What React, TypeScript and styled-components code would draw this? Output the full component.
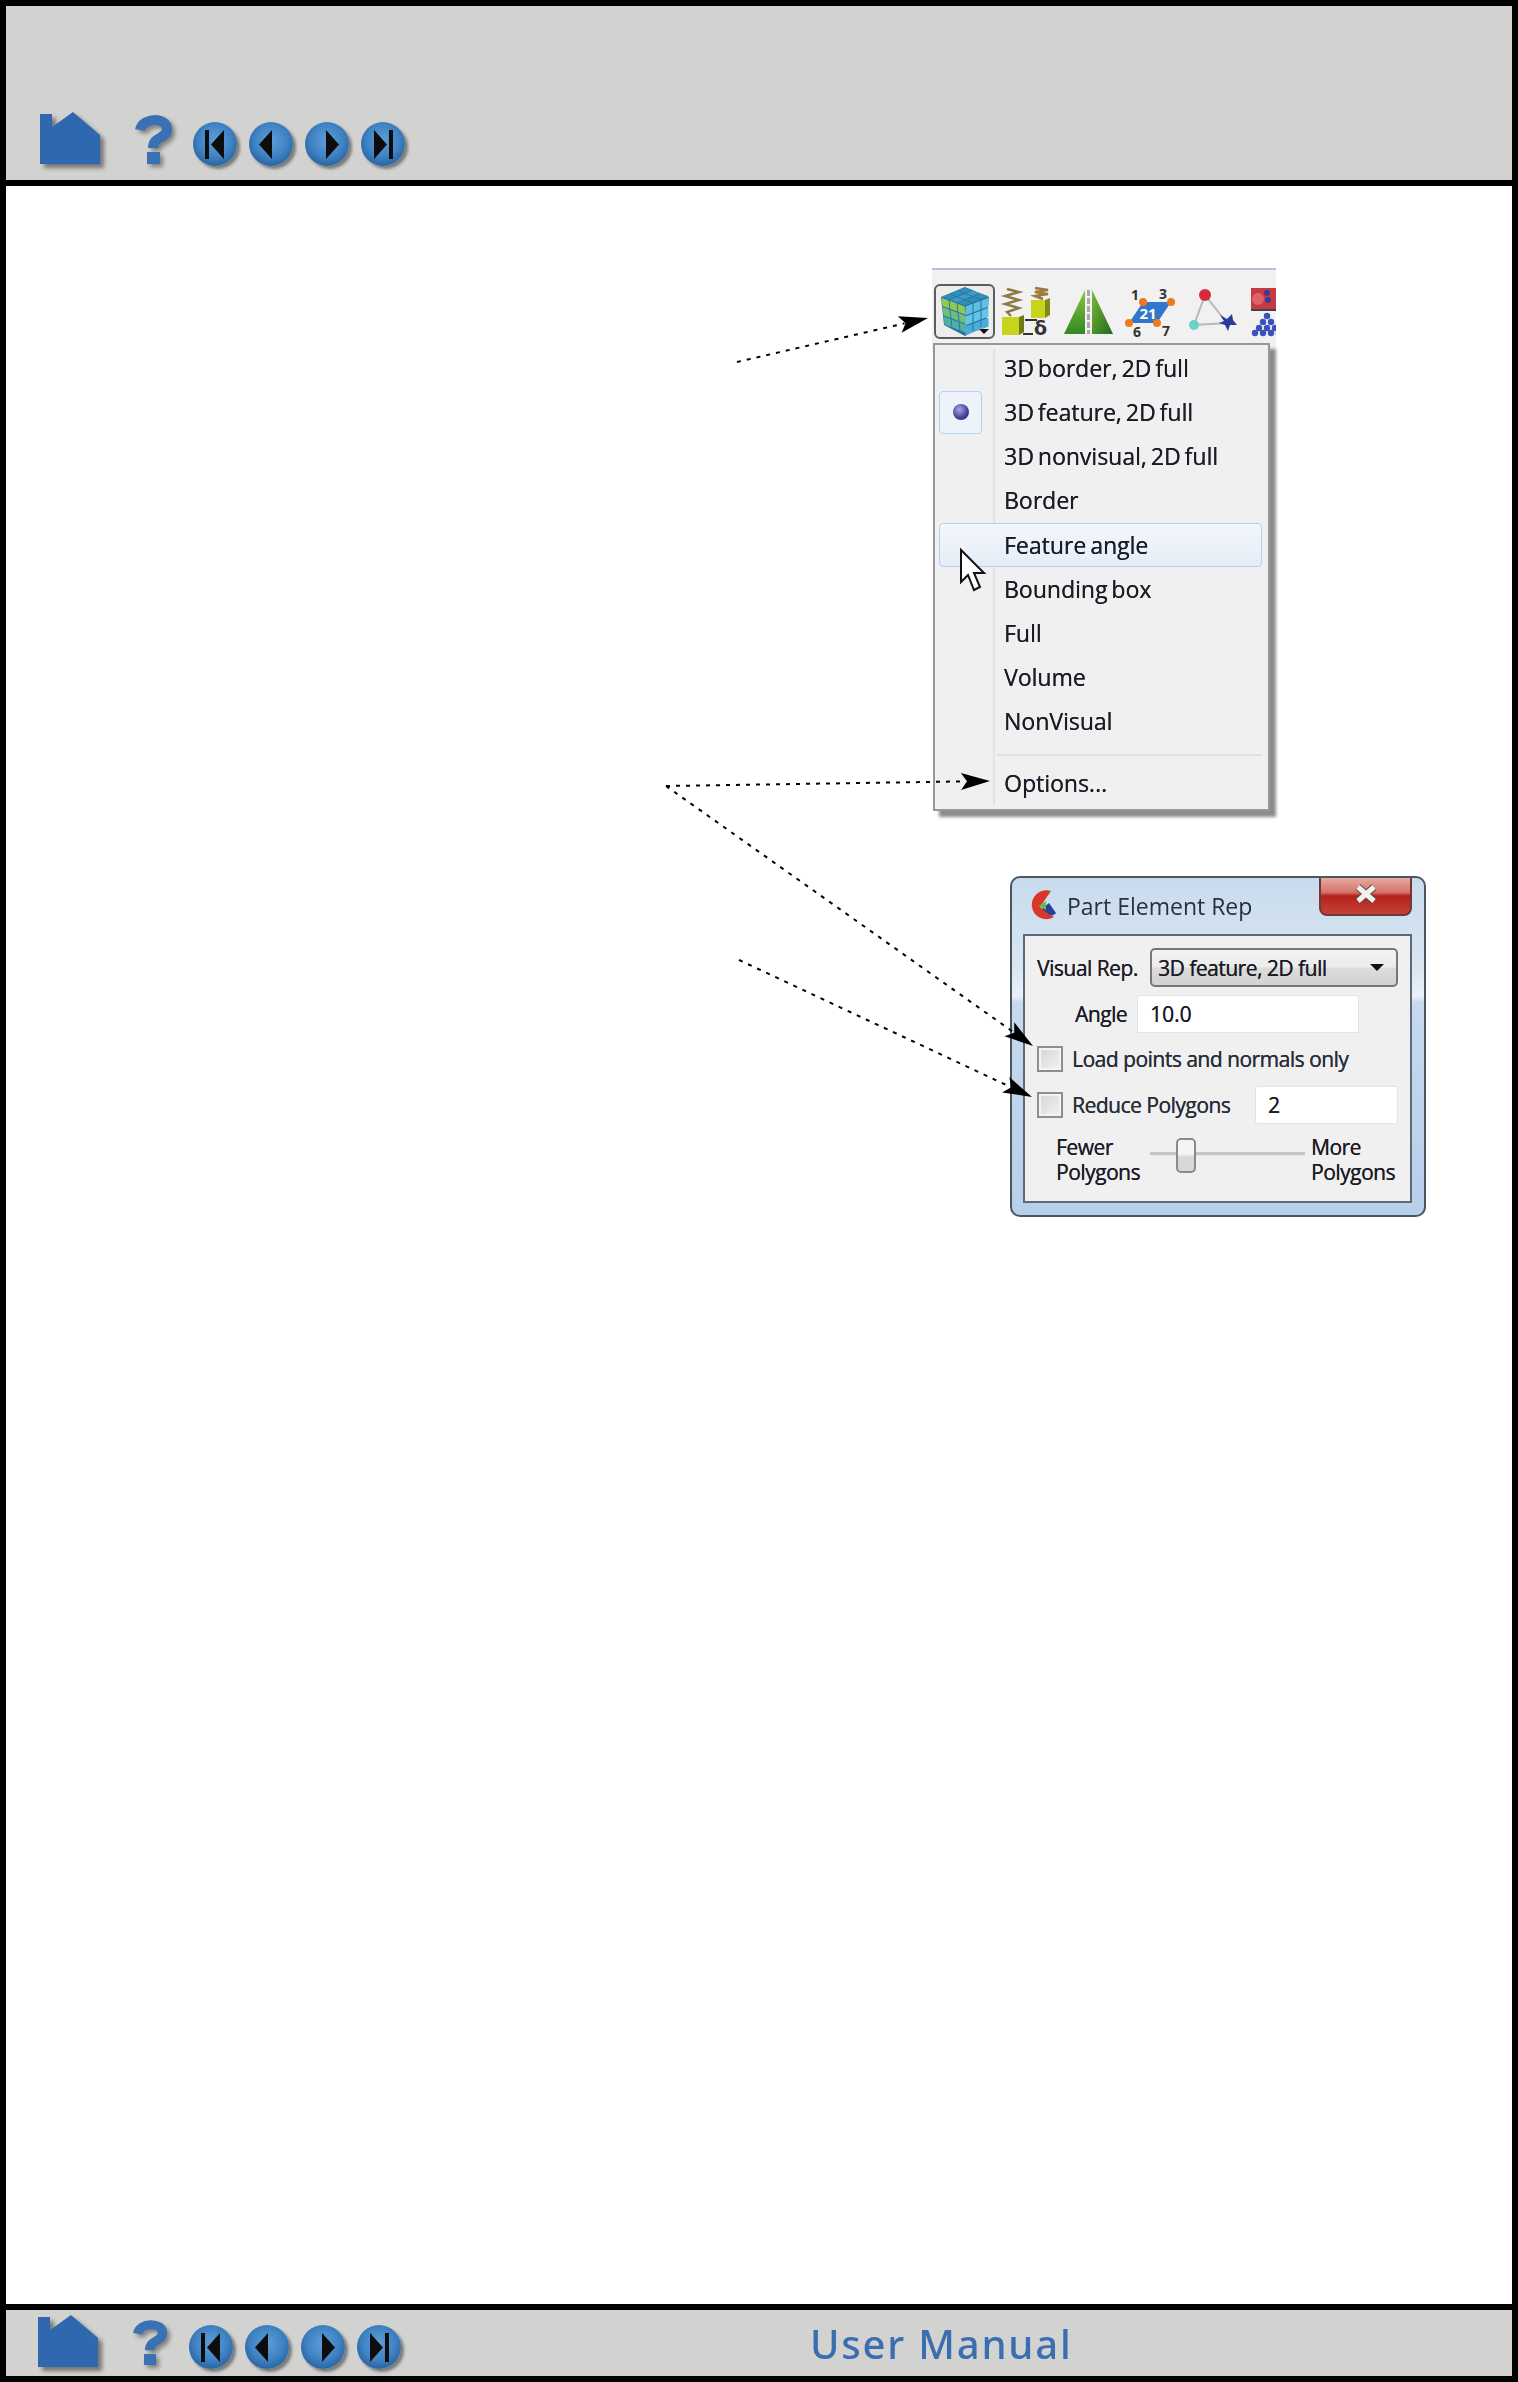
import styled, { createGlobalStyle } from "styled-components";

const GlobalStyle = createGlobalStyle`
  html, body { margin: 0; padding: 0; background: #fff; }
`;

const Frame = styled.div`
  width: 1518px;
  height: 2382px;
  box-sizing: border-box;
  border: 6px solid #000;
  position: relative;
  display: flex;
  flex-direction: column;
  font-family: "Open Sans", "Noto Sans", sans-serif;
  color: #1c1c28;
  overflow: hidden;
`;

const Header = styled.header`
  height: 180px;
  box-sizing: border-box;
  background: #d2d2d0;
  border-bottom: 6px solid #000;
  display: flex;
  align-items: flex-end;
`;

const Footer = styled.footer`
  height: 72px;
  box-sizing: border-box;
  background: #d2d2d0;
  border-top: 6px solid #000;
  display: flex;
  align-items: flex-end;
`;

const NavRow = styled.nav<{ $left: number; $bottom: number }>`
  display: flex;
  align-items: flex-end;
  padding-left: ${p => p.$left}px;
  padding-bottom: ${p => p.$bottom}px;
`;

const HomeIcon = styled.svg`
  width: 60px;
  height: 52px;
  margin: 0 35px 2px 0;
  overflow: visible;
  filter: drop-shadow(4px 4px 2px #757575);
`;

const HelpIcon = styled.svg<{ $width: number; $after: number }>`
  width: ${p => p.$width}px;
  height: 48px;
  margin: 0 ${p => p.$after}px 2px 0;
  overflow: visible;
  filter: drop-shadow(3px 3px 2px #808080);
`;

const RoundButton = styled.div`
  width: 44px;
  height: 44px;
  margin-right: 12px;
  border-radius: 50%;
  background: radial-gradient(circle at 50% 42%, #5f9fd6 0%, #3f83c4 48%, #28629f 78%, #1b4a80 100%);
  box-shadow: 3px 3px 3px #7a7a7a;
  &:last-child { margin-right: 0; }
`;

const Glyph = styled.svg`
  display: block;
  width: 44px;
  height: 44px;
`;

const ManualTitle = styled.div`
  margin: 0 0 6px 409px;
  width: 262px;
  font-family: "Noto Sans", "Open Sans", sans-serif;
  font-size: 40px;
  line-height: 52px;
  font-weight: 500;
  letter-spacing: 1.8px;
  color: #3a6eb0;
  white-space: nowrap;
  filter: blur(0.5px);
`;

const Main = styled.main`
  flex: 1;
  background: #fff;
  display: flex;
  flex-direction: column;
  padding-top: 82px;
`;

const Figure = styled.div`
  display: flex;
  flex-direction: column;
  align-items: flex-start;
  filter: blur(0.45px);
`;

const Toolbar = styled.div`
  margin-left: 926px;
  width: 344px;
  height: 84px;
  box-sizing: border-box;
  background: #f1f1f1;
  border-top: 2px solid #b9bdd6;
  padding: 14px 0 0 2px;
  display: flex;
  align-items: flex-start;
  overflow: hidden;
`;

const ToolMenuButton = styled.div`
  width: 61px;
  height: 55px;
  flex-shrink: 0;
  box-sizing: border-box;
  border: 2px solid #5c5c5c;
  border-radius: 6px;
  background: #ececec;
  position: relative;
`;

const DropCaret = styled.span`
  position: absolute;
  right: 4px;
  bottom: 3px;
  border-left: 5px solid transparent;
  border-right: 5px solid transparent;
  border-top: 5px solid #111;
`;

const ToolIcon = styled.svg`
  display: block;
  width: 62px;
  height: 56px;
  flex-shrink: 0;
`;

const CubeIcon = styled.svg`
  display: block;
  width: 57px;
  height: 51px;
`;

const Menu = styled.div`
  margin: -9px 0 0 927px;
  width: 337px;
  height: 468px;
  box-sizing: border-box;
  background: #f0f0f0;
  border: 2px solid #979797;
  box-shadow: 6px 6px 3px #8c8c8c;
  padding-top: 1px;
  position: relative;
  &::before {
    content: "";
    position: absolute;
    left: 58px;
    top: 4px;
    bottom: 4px;
    width: 2px;
    background: #e2e2e2;
  }
`;

const MenuItem = styled.div<{ $hover?: boolean }>`
  position: relative;
  height: 44.15px;
  margin: 0 6px 0 4px;
  box-sizing: border-box;
  display: flex;
  align-items: center;
  font-size: 23px;
  line-height: 30px;
  word-spacing: -2px;
  text-shadow: 0.25px 0 0 #1c1c28;
  border-radius: 4px;
  border: 1px solid ${p => (p.$hover ? "#b4d0f0" : "transparent")};
  background: ${p => (p.$hover ? "linear-gradient(#f3f7fb, #e4edf7)" : "transparent")};
`;

const CheckSlot = styled.span<{ $on?: boolean }>`
  width: 43px;
  height: 43px;
  margin: 0 22px 0 -1px;
  box-sizing: border-box;
  flex-shrink: 0;
  border-radius: 4px;
  border: 1px solid ${p => (p.$on ? "#b4d0f0" : "transparent")};
  background: ${p => (p.$on ? "#eef3f9" : "transparent")};
  display: flex;
  align-items: center;
  justify-content: center;
`;

const RadioDot = styled.span`
  width: 16px;
  height: 16px;
  border-radius: 50%;
  background: radial-gradient(circle at 40% 35%, #a8a8e0, #3f3f98 60%, #25256a);
`;

const MenuSeparator = styled.div`
  height: 2px;
  margin: 11px 6px 5px 62px;
  background: #e0e0e0;
`;

const Cursor = styled.svg`
  position: absolute;
  left: 20px;
  top: 25px;
  width: 26px;
  height: 44px;
  overflow: visible;
`;

const Dialog = styled.section`
  margin: 65px 0 0 1004px;
  width: 416px;
  height: 341px;
  box-sizing: border-box;
  border: 2px solid #4a5661;
  border-radius: 10px;
  padding: 0 12px 12px 11px;
  background: linear-gradient(#c8dbed 0%, #d9e6f2 26%, #e9f1f8 35%, #c6d9ef 37%, #b8cfea 100%);
  display: flex;
  flex-direction: column;
`;

const TitleBar = styled.div`
  height: 56px;
  flex-shrink: 0;
  display: flex;
  align-items: flex-start;
`;

const AppLogo = styled.svg`
  width: 27px;
  height: 32px;
  margin: 11px 11px 0 6px;
`;

const TitleText = styled.div`
  font-size: 23px;
  line-height: 30px;
  margin-top: 13px;
  color: #26323e;
`;

const CloseButton = styled.div`
  margin-left: auto;
  width: 93px;
  height: 38px;
  box-sizing: border-box;
  border: 2px solid #6d3a3a;
  border-top: none;
  border-radius: 0 0 8px 8px;
  background: linear-gradient(#e6aaa2 0%, #d87268 40%, #b3221c 50%, #c4423a 100%);
  display: flex;
  justify-content: center;
  padding-top: 6px;
`;

const CloseMark = styled.svg`
  width: 24px;
  height: 20px;
`;

const Panel = styled.div`
  flex: 1;
  box-sizing: border-box;
  background: #f0f0f0;
  border: 2px solid #5a6a78;
  padding: 12px 12px 0 12px;
  display: flex;
  flex-direction: column;
  font-size: 21px;
  line-height: 26px;
  letter-spacing: -0.5px;
  text-shadow: 0.2px 0 0 #1c1c28;
`;

const Row = styled.div<{ $height: number; $top?: number; $indent?: number }>`
  display: flex;
  align-items: center;
  height: ${p => p.$height}px;
  margin-top: ${p => p.$top ?? 0}px;
  padding-left: ${p => p.$indent ?? 0}px;
`;

const FieldLabel = styled.span<{ $width: number }>`
  width: ${p => p.$width}px;
  flex-shrink: 0;
  white-space: nowrap;
`;

const ComboBox = styled.div`
  width: 248px;
  height: 39px;
  box-sizing: border-box;
  border: 2px solid #777;
  border-radius: 5px;
  padding: 0 12px 0 6px;
  background: linear-gradient(#f3f3f3 0%, #ececec 48%, #dcdcda 52%, #d2d2d0 100%);
  display: flex;
  align-items: center;
  justify-content: space-between;
`;

const ComboCaret = styled.span`
  border-left: 7px solid transparent;
  border-right: 7px solid transparent;
  border-top: 7px solid #111;
`;

const TextInput = styled.div<{ $width: number }>`
  width: ${p => p.$width}px;
  height: 38px;
  flex-shrink: 0;
  box-sizing: border-box;
  background: #fff;
  border: 1px solid #e4e4e4;
  border-radius: 2px;
  padding-left: 12px;
  display: flex;
  align-items: center;
  letter-spacing: 0;
`;

const CheckBox = styled.span`
  width: 26px;
  height: 26px;
  margin-right: 9px;
  flex-shrink: 0;
  box-sizing: border-box;
  border: 2px solid #8e8e8e;
  outline: 2px solid #f4f4f4;
  outline-offset: -4px;
  background: linear-gradient(135deg, #d6d6d6, #f2f2f2);
`;

const CheckLabel = styled.span<{ $width?: number }>`
  width: ${p => (p.$width ? `${p.$width}px` : "auto")};
  white-space: nowrap;
  color: #28303c;
`;

const SliderLabel = styled.div<{ $width: number }>`
  width: ${p => p.$width}px;
  flex-shrink: 0;
  line-height: 25px;
`;

const SliderTrack = styled.div`
  width: 155px;
  height: 3px;
  margin-right: 6px;
  margin-top: -12px;
  flex-shrink: 0;
  background: #c4c4c4;
  border-bottom: 1px solid #e8e8e8;
  position: relative;
`;

const SliderThumb = styled.span`
  position: absolute;
  left: 26px;
  top: -14px;
  width: 20px;
  height: 35px;
  box-sizing: border-box;
  border: 2px solid #8a8a8a;
  border-radius: 5px;
  background: linear-gradient(#f4f4f4 45%, #d8d8d8 55%);
`;

const Annotations = styled.svg`
  position: absolute;
  left: -6px;
  top: -6px;
  width: 1518px;
  height: 2382px;
  pointer-events: none;
`;

const Arrow = ({ x1, y1, x2, y2 }: { x1: number; y1: number; x2: number; y2: number }) => {
  const angle = (Math.atan2(y2 - y1, x2 - x1) * 180) / Math.PI;
  const rad = (angle * Math.PI) / 180;
  return (
    <g>
      <line
        x1={x1}
        y1={y1}
        x2={x2 - Math.cos(rad) * 24}
        y2={y2 - Math.sin(rad) * 24}
        stroke="#000"
        strokeWidth={2}
        strokeDasharray="4 6"
      />
      <polygon
        points="0,0 -29,-8.5 -23,0 -29,8.5"
        fill="#000"
        transform={`translate(${x2} ${y2}) rotate(${angle})`}
      />
    </g>
  );
};

type GlyphKind = "first" | "prev" | "next" | "last";

const glyphShapes: Record<GlyphKind, string[]> = {
  first: ["12,8 16,8 16,37 12,37", "31,8 31,37 18,22.5"],
  prev: ["23,8 23,37 10,22.5"],
  next: ["21,8 21,37 34,22.5"],
  last: ["28,8 32,8 32,37 28,37", "13,8 13,37 26,22.5"],
};

const NavIcons = ({ helpWidth, helpAfter }: { helpWidth: number; helpAfter: number }) => (
  <>
    <HomeIcon viewBox="0 0 60 52">
      <polygon points="0,2 12,2 12,15 33,0 60,23 60,52 0,52" fill="#3068b0" />
    </HomeIcon>
    <HelpIcon $width={helpWidth} $after={helpAfter} viewBox="0 0 37 48">
      <path
        d="M5 14 C7 1 32 1 32 13 C32 23 18 20 18 32"
        fill="none"
        stroke="#3a70b4"
        strokeWidth={10}
      />
      <rect x="12" y="36" width="13" height="12" fill="#3a70b4" />
    </HelpIcon>
    {(Object.keys(glyphShapes) as GlyphKind[]).map(kind => (
      <RoundButton key={kind}>
        <Glyph viewBox="0 0 44 44">
          {glyphShapes[kind].map(points => (
            <polygon key={points} points={points} fill="#0d0d0d" />
          ))}
        </Glyph>
      </RoundButton>
    ))}
  </>
);

// isometric cube: each face is split in 3x3 cells
type Pt = [number, number];

const cell = (a: Pt, b: Pt, d: Pt, i: number, j: number) => {
  const at = (u: number, v: number) =>
    `${a[0] + (b[0] - a[0]) * u + (d[0] - a[0]) * v},${a[1] + (b[1] - a[1]) * u + (d[1] - a[1]) * v}`;
  const pad = 0.02;
  const u0 = i / 3 + pad;
  const u1 = (i + 1) / 3 - pad;
  const v0 = j / 3 + pad;
  const v1 = (j + 1) / 3 - pad;
  return [at(u0, v0), at(u1, v0), at(u1, v1), at(u0, v1)].join(" ");
};

const faces: { a: Pt; b: Pt; d: Pt; colors: string[] }[] = [
  { a: [5, 11], b: [29, 1], d: [29, 20], colors: ["#2f8fb4", "#3a9cc2", "#2f8fb4"] },
  { a: [5, 11], b: [29, 20], d: [8, 39], colors: ["#8ecb4e", "#6fbf7c", "#4fb0a0"] },
  { a: [29, 20], b: [53, 11], d: [29, 50], colors: ["#5cc0e0", "#62c6e6", "#4aaed8"] },
];

const CubeGraphic = () => (
  <CubeIcon viewBox="0 0 57 51">
    <polygon points="5,11 29,1 53,11 50,39 29,50 8,39" fill="#2c6ea8" />
    {faces.map((face, f) =>
      [0, 1, 2].map(i =>
        [0, 1, 2].map(j => (
          <polygon
            key={`${f}-${i}-${j}`}
            points={cell(face.a, face.b, face.d, i, j)}
            fill={face.colors[j]}
          />
        )),
      ),
    )}
  </CubeIcon>
);

const SpringGraphic = () => (
  <ToolIcon viewBox="0 0 62 56">
    <polyline
      points="12,5 24,8 10,12 24,16 10,20 24,24 12,28 16,32"
      fill="none"
      stroke="#8b7a44"
      strokeWidth={2.4}
    />
    <polyline points="40,4 53,6 40,8 53,10 40,12 48,15" fill="none" stroke="#9a7a3a" strokeWidth={2.6} />
    <polygon points="7,33 24,33 24,51 7,51" fill="#c8d41c" />
    <polygon points="24,33 29,31 29,48 24,51" fill="#6f7a18" />
    <polygon points="36,16 50,16 50,34 36,34" fill="#c8d41c" />
    <polygon points="50,16 55,14 55,31 50,34" fill="#7f8a1c" />
    <line x1="30" y1="36" x2="42" y2="36" stroke="#333" strokeWidth={2} />
    <line x1="28" y1="50" x2="38" y2="50" stroke="#333" strokeWidth={2} />
    <text x="39" y="51" fontFamily="DejaVu Sans, sans-serif" fontWeight="700" fontSize="19" fill="#333">
      δ
    </text>
  </ToolIcon>
);

const RoadGraphic = () => (
  <ToolIcon viewBox="0 0 62 56">
    <defs>
      <linearGradient id="roadLeft" x1="0" y1="0" x2="0" y2="1">
        <stop offset="0" stopColor="#8cc43c" />
        <stop offset="1" stopColor="#2e8a22" />
      </linearGradient>
      <linearGradient id="roadRight" x1="0" y1="0" x2="1" y2="1">
        <stop offset="0" stopColor="#7cba38" />
        <stop offset="1" stopColor="#1f6a20" />
      </linearGradient>
    </defs>
    <polygon points="28,6 7,50 28,50" fill="url(#roadLeft)" />
    <polygon points="35,6 56,50 35,50" fill="url(#roadRight)" />
    <line x1="31.5" y1="6" x2="31.5" y2="50" stroke="#a8a8a8" strokeWidth={3} strokeDasharray="6 2" />
  </ToolIcon>
);

const QuadGraphic = () => (
  <ToolIcon viewBox="0 0 62 56">
    <polygon points="24,18 52,18 38,39 10,39" fill="#2f76cc" />
    {[[24, 18], [52, 18], [38, 39], [10, 39]].map(([cx, cy]) => (
      <circle key={cx} cx={cx} cy={cy} r={4} fill="#ee7a1a" />
    ))}
    <g fontFamily="Open Sans, sans-serif" fontWeight="700" fontSize="14" fill="#333" textAnchor="middle">
      <text x="16" y="16">1</text>
      <text x="44" y="15">3</text>
      <text x="18" y="53">6</text>
      <text x="47" y="52">7</text>
      <text x="29" y="35" fill="#fff" fontSize="15">21</text>
    </g>
  </ToolIcon>
);

const TriangleGraphic = () => (
  <ToolIcon viewBox="0 0 62 56">
    <polygon points="24,11 13,41 46,39" fill="none" stroke="#b8b8b8" strokeWidth={2} />
    <circle cx="24" cy="11" r="6" fill="#d42a3c" />
    <circle cx="13" cy="41" r="5" fill="#6cd0c8" />
    <path
      d="M39 31 L46 35 L51 30 L52 36 L56 41 L49 41 L47 47 L44 41 L38 39 L43 37 Z"
      fill="#2c3a9c"
    />
  </ToolIcon>
);

const PileGraphic = () => (
  <ToolIcon viewBox="0 0 62 56">
    <rect x="8" y="4" width="30" height="21" fill="#c83a42" />
    <circle cx="15" cy="15" r="6" fill="#e0606a" />
    <circle cx="24" cy="9" r="3" fill="#3a3a9c" />
    <circle cx="25" cy="16" r="3" fill="#3a3a9c" />
    <rect x="8" y="25" width="30" height="2" fill="#444" />
    {[
      [24, 32], [20, 38], [28, 38], [16, 44], [24, 44], [32, 44], [12, 49], [20, 49], [28, 49], [36, 49],
    ].map(([cx, cy]) => (
      <circle key={`${cx}-${cy}`} cx={cx} cy={cy} r={3.2} fill="#3a52bc" />
    ))}
  </ToolIcon>
);

const menuItems = [
  "3D border, 2D full",
  "3D feature, 2D full",
  "3D nonvisual, 2D full",
  "Border",
  "Feature angle",
  "Bounding box",
  "Full",
  "Volume",
  "NonVisual",
];

const App = () => (
  <>
    <GlobalStyle />
    <Frame>
      <Header>
        <NavRow $left={34} $bottom={14}>
          <NavIcons helpWidth={37} helpAfter={21} />
        </NavRow>
      </Header>
      <Main>
        <Figure>
          <Toolbar>
            <ToolMenuButton>
              <CubeGraphic />
              <DropCaret />
            </ToolMenuButton>
            <SpringGraphic />
            <RoadGraphic />
            <QuadGraphic />
            <TriangleGraphic />
            <PileGraphic />
          </Toolbar>
          <Menu>
            {menuItems.map((label, i) => (
              <MenuItem key={label} $hover={label === "Feature angle"}>
                <CheckSlot $on={i === 1}>{i === 1 && <RadioDot />}</CheckSlot>
                {label}
                {label === "Feature angle" && (
                  <Cursor viewBox="0 0 26 44">
                    <path
                      d="M1 1 L1 33 L8 26 L14 41 L20 38 L14 24 L24 24 Z"
                      fill="#fff"
                      stroke="#111"
                      strokeWidth={2}
                    />
                  </Cursor>
                )}
              </MenuItem>
            ))}
            <MenuSeparator />
            <MenuItem>
              <CheckSlot />
              Options...
            </MenuItem>
          </Menu>
          <Dialog>
            <TitleBar>
              <AppLogo viewBox="0 0 27 32">
                <path d="M22 2 A14.5 14.5 0 1 0 25 28 L11 18 Z" fill="#d8382a" />
                <path d="M13 20 L20 14 L27 24 Q25 27 21 26 Z" fill="#2a3f98" />
                <polygon points="10,17 17,12 17,21" fill="#5cc04a" />
              </AppLogo>
              <TitleText>Part Element Rep</TitleText>
              <CloseButton>
                <CloseMark viewBox="0 0 24 20">
                  <path
                    d="M4 3 L20 17 M20 3 L4 17"
                    fill="none"
                    stroke="#5c4a4a"
                    strokeWidth={7}
                  />
                  <path
                    d="M4 3 L20 17 M20 3 L4 17"
                    fill="none"
                    stroke="#f4f0ee"
                    strokeWidth={5}
                  />
                </CloseMark>
              </CloseButton>
            </TitleBar>
            <Panel>
              <Row $height={39}>
                <FieldLabel $width={113}>Visual Rep.</FieldLabel>
                <ComboBox>
                  3D feature, 2D full
                  <ComboCaret />
                </ComboBox>
              </Row>
              <Row $height={37} $top={8} $indent={38}>
                <FieldLabel $width={62}>Angle</FieldLabel>
                <TextInput $width={222}>10.0</TextInput>
              </Row>
              <Row $height={26} $top={14}>
                <CheckBox />
                <CheckLabel>Load points and normals only</CheckLabel>
              </Row>
              <Row $height={38} $top={14}>
                <CheckBox />
                <CheckLabel $width={183}>Reduce Polygons</CheckLabel>
                <TextInput $width={143}>2</TextInput>
              </Row>
              <Row $height={50} $top={11} $indent={19}>
                <SliderLabel $width={94}>
                  Fewer
                  <br />
                  Polygons
                </SliderLabel>
                <SliderTrack>
                  <SliderThumb />
                </SliderTrack>
                <SliderLabel $width={90}>
                  More
                  <br />
                  Polygons
                </SliderLabel>
              </Row>
            </Panel>
          </Dialog>
        </Figure>
      </Main>
      <Footer>
        <NavRow $left={32} $bottom={7}>
          <NavIcons helpWidth={34} helpAfter={22} />
        </NavRow>
        <ManualTitle>User Manual</ManualTitle>
      </Footer>
      <Annotations viewBox="0 0 1518 2382">
        <Arrow x1={737} y1={362} x2={928} y2={318} />
        <Arrow x1={666} y1={786} x2={990} y2={781} />
        <Arrow x1={666} y1={786} x2={1033} y2={1046} />
        <Arrow x1={739} y1={960} x2={1032} y2={1097} />
      </Annotations>
    </Frame>
  </>
);

export default App;
